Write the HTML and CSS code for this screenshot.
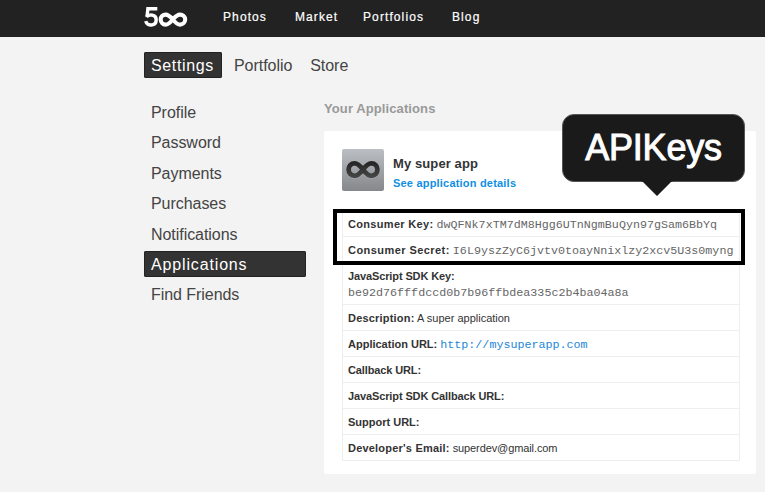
FILE: index.html
```html
<!DOCTYPE html>
<html lang="en">
<head>
<meta charset="utf-8">
<title>Settings - Applications</title>
<link rel="stylesheet" href="styles.css">
</head>
<body>
<header class="topbar">
  <svg class="logo" width="44" height="21" viewBox="0 0 44 21" fill="none" stroke="#fff">
    <path d="M13.3 1.7H3.9L3 9.6" stroke-width="3.4"/>
    <path d="M2.4 10C5 6.9 12.2 7.2 12.2 12.7C12.2 19.4 3 19.6 1.7 14.2" stroke-width="3.4"/>
    <path d="M28.8 12.5C26.3 9.6 24.6 7.6 21.6 7.6C18.8 7.6 16.7 9.8 16.7 12.5S18.8 17.6 21.6 17.6C24.6 17.6 26.3 15.4 28.8 12.5S33 7.6 36 7.6C38.8 7.6 41.2 9.8 41.2 12.5S38.8 17.6 36 17.6C33 17.6 31.3 15.4 28.8 12.5Z" stroke-width="4.1"/>
  </svg>
  <nav class="mainnav">
    <a class="n-photos">Photos</a><a class="n-market">Market</a><a class="n-portfolios">Portfolios</a><a>Blog</a>
  </nav>
</header>
<nav class="tabs">
  <a class="tab active">Settings</a><a class="tab">Portfolio</a><a class="tab">Store</a>
</nav>
<div class="columns">
  <nav class="sidebar">
    <a>Profile</a><a>Password</a><a>Payments</a><a>Purchases</a><a>Notifications</a><a class="active">Applications</a><a>Find Friends</a>
  </nav>
  <main>
    <h1>Your Applications</h1>
    <section class="card">
      <div class="app">
        <svg class="appicon" width="42" height="42" viewBox="0 0 42 42" fill="none">
          <defs>
            <linearGradient id="bg" x1="0" y1="0" x2="0" y2="1"><stop stop-color="#bbbfc3"/><stop offset="1" stop-color="#85888b"/></linearGradient>
            <linearGradient id="ring" x1="0" y1="12" x2="0" y2="29" gradientUnits="userSpaceOnUse"><stop stop-color="#222"/><stop offset="1" stop-color="#484848"/></linearGradient>
          </defs>
          <rect width="42" height="42" rx="2" fill="url(#bg)"/>
          <path d="M21 21.2C18.3 17.8 16.2 15 12.8 15C9 15 6.6 17.5 6.6 21.2S9 27.4 12.8 27.4C16.2 27.4 18.3 24.6 21 21.2S25.8 15 29.2 15C33 15 35.4 17.5 35.4 21.2S33 27.4 29.2 27.4C25.8 27.4 23.7 24.6 21 21.2Z" stroke="#b4b6b8" stroke-width="4.6"/>
          <path d="M21 20.6C18.3 17.2 16.2 14.4 12.8 14.4C9 14.4 6.6 16.9 6.6 20.6S9 26.8 12.8 26.8C16.2 26.8 18.3 24 21 20.6S25.8 14.4 29.2 14.4C33 14.4 35.4 16.9 35.4 20.6S33 26.8 29.2 26.8C25.8 26.8 23.7 24 21 20.6Z" stroke="url(#ring)" stroke-width="4.8"/>
        </svg>
        <div class="appinfo"><h2>My super app</h2><a>See application details</a></div>
      </div>
      <div class="details">
        <div class="row"><b>Consumer Key:</b> <code>dwQFNk7xTM7dM8Hgg6UTnNgmBuQyn97gSam6BbYq</code></div>
        <div class="row"><b class="wide">Consumer Secret:</b> <code>I6L9yszZyC6jvtv0toayNnixlzy2xcv5U3s0myng</code></div>
        <div class="row"><b class="tight">JavaScript SDK Key:</b><br><code>be92d76fffdccd0b7b96ffbdea335c2b4ba04a8a</code></div>
        <div class="row"><b class="loose">Description:</b> <span>A super application</span></div>
        <div class="row"><b class="plain">Application URL:</b> <code class="link">http://mysuperapp.com</code></div>
        <div class="row"><b class="tight">Callback URL:</b></div>
        <div class="row"><b class="tight">JavaScript SDK Callback URL:</b></div>
        <div class="row"><b class="plain">Support URL:</b></div>
        <div class="row"><b class="loose">Developer's Email:</b> <span class="email">superdev@gmail.com</span></div>
        <div class="highlight"></div>
      </div>
      <div class="callout">APIKeys
        <svg class="tip" width="32" height="16" viewBox="0 0 32 16"><path d="M0 0H32L30 1L16 15L2 1Z" fill="#1a1a1a"/></svg>
      </div>
    </section>
  </main>
</div>
</body>
</html>
```

FILE: styles.css
```css
* { box-sizing: border-box; }
body {
  margin: 0;
  height: 492px;
  overflow: hidden;
  background: #f3f3f3;
  color: #333;
  font-family: "Liberation Sans", Arial, sans-serif;
}
.topbar {
  display: flex;
  height: 37px;
  padding-left: 144px;
  background: #222;
}
.logo { margin-top: 7px; }
.mainnav {
  display: flex;
  margin-left: 35px;
  color: #fff;
  font-size: 12px;
  line-height: 34px;
  letter-spacing: 1.1px;
  -webkit-text-stroke: 0.2px #fff;
}
.n-photos { width: 72px; }
.n-market { width: 68px; }
.n-portfolios { width: 89px; }
.tabs {
  display: flex;
  gap: 4px;
  margin: 15px 0 0 144px;
  color: #444;
  font-size: 16px;
  line-height: 27px;
}
.tab { height: 26px; padding: 0 7px; letter-spacing: -0.05px; }
.active {
  border-radius: 2px;
  background: #333;
  box-shadow: inset 0 0 0 1px #222;
  color: #fff;
}
.tab.active { width: 78px; margin-right: 1px; letter-spacing: 0.65px; }
.columns { display: flex; }
.sidebar {
  display: flex;
  flex-direction: column;
  gap: 4.4px;
  width: 162px;
  margin: 21px 0 0 144px;
  color: #444;
  font-size: 16px;
  line-height: 28px;
}
.sidebar a { height: 26px; padding-left: 7px; letter-spacing: -0.05px; }
.sidebar .active { letter-spacing: 0.85px; }
main { width: 432px; margin-left: 18px; }
h1 {
  margin: 23px 0 0;
  color: #999;
  font-size: 13px;
  line-height: 16px;
  letter-spacing: 0.1px;
}
.card {
  position: relative;
  height: 343px;
  margin-top: 14px;
  padding: 18px 16px 0 18px;
  border-radius: 2px;
  background: #fff;
}
.app { display: flex; height: 61px; }
.appinfo { margin: 6px 0 0 9px; }
h2 { margin: 0; font-size: 13px; line-height: 18px; letter-spacing: 0.1px; }
.appinfo a {
  display: block;
  margin-top: 2px;
  color: #0f8fe3;
  font-size: 11px;
  font-weight: bold;
  line-height: 16px;
  letter-spacing: 0.2px;
}
.details {
  position: relative;
  border: 1px solid #eee;
  border-bottom: 0;
  font-size: 11px;
  line-height: 16px;
}
.row { height: 26px; padding: 5px 0 0 5px; border-bottom: 1px solid #eee; white-space: nowrap; }
.row:nth-child(3) { height: 42px; }
.row b { letter-spacing: 0.32px; }
.row .wide { letter-spacing: 0.44px; }
.row .loose { letter-spacing: 0.2px; }
.row .plain { letter-spacing: 0; }
.row .tight { letter-spacing: -0.12px; }
.email { letter-spacing: -0.1px; }
.row code {
  color: #666;
  font-family: "Liberation Mono", monospace;
  font-size: 11.69px;
  line-height: 1;
}
.row .link { color: #1c86d8; }
.highlight {
  position: absolute;
  top: -2px;
  left: -10px;
  width: 412px;
  height: 56px;
  border: 4px solid #000;
}
.callout {
  position: absolute;
  top: -17px;
  left: 238px;
  width: 183px;
  height: 68px;
  border: 1px solid #555;
  border-radius: 12px;
  background: #1a1a1a;
  color: #fff;
  font-size: 36px;
  line-height: 66px;
  text-align: center;
  letter-spacing: -0.2px;
  -webkit-text-stroke: 1px #fff;
}
.tip { position: absolute; top: 66px; left: 78px; }
```
